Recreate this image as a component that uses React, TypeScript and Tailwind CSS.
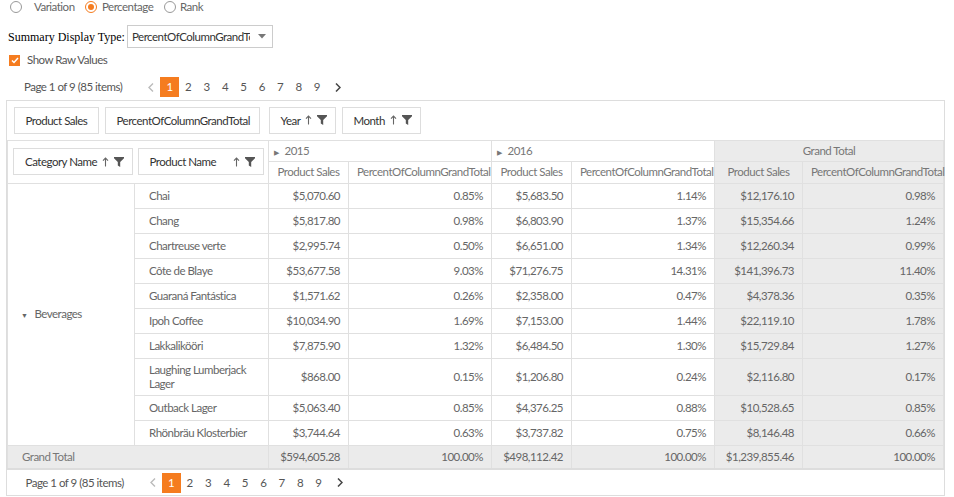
import React from 'react';

type Row = { name: string[]; a: string; ap: string; b: string; bp: string; g: string; gp: string };

const rows: Row[] = [
  { name: ['Chai'], a: '$5,070.60', ap: '0.85%', b: '$5,683.50', bp: '1.14%', g: '$12,176.10', gp: '0.98%' },
  { name: ['Chang'], a: '$5,817.80', ap: '0.98%', b: '$6,803.90', bp: '1.37%', g: '$15,354.66', gp: '1.24%' },
  { name: ['Chartreuse verte'], a: '$2,995.74', ap: '0.50%', b: '$6,651.00', bp: '1.34%', g: '$12,260.34', gp: '0.99%' },
  { name: ['Côte de Blaye'], a: '$53,677.58', ap: '9.03%', b: '$71,276.75', bp: '14.31%', g: '$141,396.73', gp: '11.40%' },
  { name: ['Guaraná Fantástica'], a: '$1,571.62', ap: '0.26%', b: '$2,358.00', bp: '0.47%', g: '$4,378.36', gp: '0.35%' },
  { name: ['Ipoh Coffee'], a: '$10,034.90', ap: '1.69%', b: '$7,153.00', bp: '1.44%', g: '$22,119.10', gp: '1.78%' },
  { name: ['Lakkalikööri'], a: '$7,875.90', ap: '1.32%', b: '$6,484.50', bp: '1.30%', g: '$15,729.84', gp: '1.27%' },
  { name: ['Laughing Lumberjack', 'Lager'], a: '$868.00', ap: '0.15%', b: '$1,206.80', bp: '0.24%', g: '$2,116.80', gp: '0.17%' },
  { name: ['Outback Lager'], a: '$5,063.40', ap: '0.85%', b: '$4,376.25', bp: '0.88%', g: '$10,528.65', gp: '0.85%' },
  { name: ['Rhönbräu Klosterbier'], a: '$3,744.64', ap: '0.63%', b: '$3,737.82', bp: '0.75%', g: '$8,146.48', gp: '0.66%' },
];

// Segoe UI isn't around, so squeeze Lato a bit to get the same widths
const font = { fontFamily: 'Lato, "Open Sans", sans-serif', letterSpacing: '-0.5px' };

function SortIcon() {
  return (
    <svg width="7" height="10" viewBox="0 0 7 10" className="text-[#666]">
      <path d="M3.5 1.2 L3.5 9.5" stroke="currentColor" strokeWidth="1.1" />
      <path d="M1 3.6 L3.5 1 L6 3.6" fill="none" stroke="currentColor" strokeWidth="1.1" />
    </svg>
  );
}

function FilterIcon() {
  return (
    <svg width="10" height="10" viewBox="0 0 10 10" className="text-[#555]">
      <path d="M0 0 H10 V1.2 L6.2 5 V10 L3.8 8.6 V5 L0 1.2 Z" fill="currentColor" />
    </svg>
  );
}

function Chip({ label, w, icons }: { label: string; w: string; icons?: boolean }) {
  return (
    <div className={`${w} h-[27px] border border-[#ddd] bg-white flex items-center justify-between pl-[11px] pr-[8px] text-[11.5px] text-[#333]`}>
      <span className="whitespace-nowrap">{label}</span>
      {icons && (
        <span className="flex items-center gap-[5px]">
          <SortIcon />
          <FilterIcon />
        </span>
      )}
    </div>
  );
}

function Pager() {
  return (
    <div className="flex items-center h-[20px] text-[11.5px] text-[#555]">
      <span className="w-[124px] whitespace-nowrap">Page 1 of 9 (85 items)</span>
      <span className="w-[12px] flex items-center">
        <svg width="6" height="9" viewBox="0 0 6 9">
          <path d="M5 0.5 L1 4.5 L5 8.5" fill="none" stroke="#bbb" strokeWidth="1.4" />
        </svg>
      </span>
      <span className="w-[19px] h-[20px] bg-[#f57c1f] text-white flex items-center justify-center">1</span>
      <div className="flex">
        {['2', '3', '4', '5', '6', '7', '8', '9'].map((n) => (
          <span key={n} className="w-[18.4px] text-center">{n}</span>
        ))}
      </div>
      <span className="ml-[9px] flex items-center">
        <svg width="6" height="9" viewBox="0 0 6 9">
          <path d="M1 0.5 L5 4.5 L1 8.5" fill="none" stroke="#444" strokeWidth="1.5" />
        </svg>
      </span>
    </div>
  );
}

const cell = 'border border-[#e0e0e0] px-[8px] text-[11.5px] whitespace-nowrap';
const gtCell = `${cell} text-right border-b-2 border-b-[#ddd]`;

export default function App() {
  return (
    <div className="w-[954px] h-[497px] bg-white overflow-hidden text-[#555]" style={font}>
      {/* summary display options */}
      <div className="flex items-center h-[14px] text-[11.5px] text-[#666] pl-[10px]">
        <span className="shrink-0 w-[12px] h-[12px] rounded-full border border-[#999]" />
        <span className="ml-[12px] w-[51px]">Variation</span>
        <span className="shrink-0 w-[12px] h-[12px] rounded-full border border-[#f57c1f] flex items-center justify-center">
          <span className="w-[6px] h-[6px] rounded-full bg-[#f57c1f]" />
        </span>
        <span className="ml-[5px] w-[62px]">Percentage</span>
        <span className="shrink-0 w-[12px] h-[12px] rounded-full border border-[#999]" />
        <span className="ml-[4px]">Rank</span>
      </div>
      <div className="flex items-center h-[23px] mt-[11px] pl-[8px]">
        <span className="w-[119px] text-[12px] text-black tracking-normal" style={{ fontFamily: '"Liberation Serif", serif' }}>
          Summary Display Type:
        </span>
        <div className="w-[146px] h-[23px] border border-[#ccc] flex items-center pl-[4px] pr-[6px] text-[11.5px] text-[#333]">
          <span className="flex-1 overflow-hidden whitespace-nowrap">PercentOfColumnGrandTotal</span>
          <svg width="8" height="5" viewBox="0 0 8 5" className="ml-[8px] shrink-0">
            <path d="M0 0 H8 L4 4.5 Z" fill="#777" />
          </svg>
        </div>
      </div>
      <div className="flex items-center h-[12px] mt-[6px] pl-[9px] text-[11.5px] text-[#555]">
        <span className="w-[11px] h-[11px] bg-[#f57c1f] flex items-center justify-center">
          <svg width="8" height="7" viewBox="0 0 8 7">
            <path d="M1 3.5 L3 5.5 L7 1" fill="none" stroke="white" strokeWidth="1.5" />
          </svg>
        </span>
        <span className="ml-[7px]">Show Raw Values</span>
      </div>
      <div className="mt-[11px] pl-[24px]">
        <Pager />
      </div>

      {/* pivot grid */}
      <div className="ml-[6px] mt-[3px] w-[939px] border border-[#ddd]">
        <table className="w-full table-fixed border-collapse text-[#666]">
          <colgroup>
            <col className="w-[127px]" />
            <col className="w-[134px]" />
            <col className="w-[80px]" />
            <col className="w-[143px]" />
            <col className="w-[80px]" />
            <col className="w-[143px]" />
            <col className="w-[88px]" />
            <col />
          </colgroup>
          <tbody>
            <tr className="h-[39px]">
              <td colSpan={8} className="border-b border-[#e0e0e0] px-[6px]">
                <div className="flex items-center">
                  <Chip label="Product Sales" w="w-[85px]" />
                  <div className="ml-[6px]">
                    <Chip label="PercentOfColumnGrandTotal" w="w-[155px]" />
                  </div>
                  <div className="ml-[9px]">
                    <Chip label="Year" w="w-[67px]" icons />
                  </div>
                  <div className="ml-[6px]">
                    <Chip label="Month" w="w-[79px]" icons />
                  </div>
                </div>
              </td>
            </tr>
            <tr className="h-[21px]">
              <td colSpan={2} rowSpan={2} className="border border-[#e0e0e0] pl-[5px] pr-[4px]">
                <div className="flex items-center gap-[5px]">
                  <Chip label="Category Name" w="w-[120px]" icons />
                  <Chip label="Product Name" w="w-[127px]" icons />
                </div>
              </td>
              <td colSpan={2} className={`${cell} pl-[5px] text-[#777]`}>
                <span className="text-[7px] mr-[6px]">▶</span>2015
              </td>
              <td colSpan={2} className={`${cell} pl-[5px] text-[#777]`}>
                <span className="text-[7px] mr-[6px]">▶</span>2016
              </td>
              <td colSpan={2} className={`${cell} bg-[#ebebeb] text-center text-[#777]`}>Grand Total</td>
            </tr>
            <tr className="h-[22px] text-[#777]">
              <td className={`${cell} text-center px-0`}>Product Sales</td>
              <td className={`${cell} text-center px-0`}>PercentOfColumnGrandTotal</td>
              <td className={`${cell} text-center px-0`}>Product Sales</td>
              <td className={`${cell} text-center px-0`}>PercentOfColumnGrandTotal</td>
              <td className={`${cell} text-center px-0 bg-[#ebebeb]`}>Product Sales</td>
              <td className={`${cell} text-center px-0 bg-[#ebebeb]`}>PercentOfColumnGrandTotal</td>
            </tr>
            {rows.map((r, i) => (
              <tr key={r.name[0]} className={r.name.length > 1 ? 'h-[37px]' : 'h-[25px]'}>
                {i === 0 && (
                  <td rowSpan={rows.length} className="border border-[#e0e0e0] pl-[13px] text-[11.5px] text-[#666]">
                    <span className="text-[7px] mr-[7px]">▼</span>Beverages
                  </td>
                )}
                <td className={`${cell} pl-[14px] leading-[14px] text-[#666]`}>
                  {r.name.map((n) => (
                    <div key={n}>{n}</div>
                  ))}
                </td>
                <td className={`${cell} text-right`}>{r.a}</td>
                <td className={`${cell} text-right`}>{r.ap}</td>
                <td className={`${cell} text-right`}>{r.b}</td>
                <td className={`${cell} text-right`}>{r.bp}</td>
                <td className={`${cell} text-right bg-[#ebebeb]`}>{r.g}</td>
                <td className={`${cell} text-right bg-[#ebebeb]`}>{r.gp}</td>
              </tr>
            ))}
            <tr className="h-[24px] bg-[#ebebeb]">
              <td colSpan={2} className={`${cell} pl-[14px] border-b-2 border-b-[#ddd] text-[#777]`}>Grand Total</td>
              <td className={gtCell}>$594,605.28</td>
              <td className={gtCell}>100.00%</td>
              <td className={gtCell}>$498,112.42</td>
              <td className={gtCell}>100.00%</td>
              <td className={gtCell}>$1,239,855.46</td>
              <td className={gtCell}>100.00%</td>
            </tr>
            <tr className="h-[26px]">
              <td colSpan={8} className="pl-[18px]">
                <Pager />
              </td>
            </tr>
          </tbody>
        </table>
      </div>
    </div>
  );
}
